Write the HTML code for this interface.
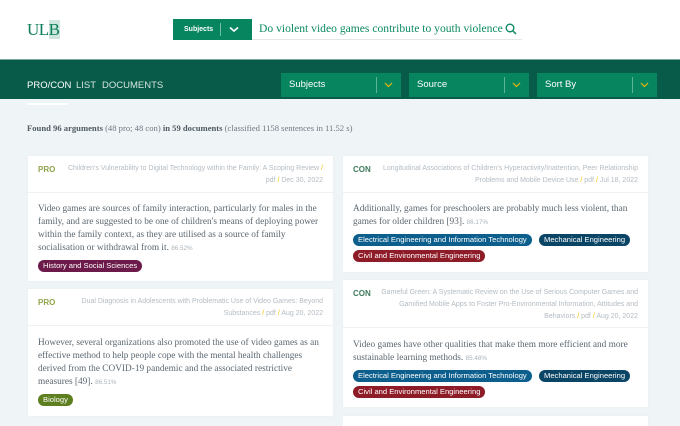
<!DOCTYPE html>
<html><head><meta charset="utf-8"><style>
*{margin:0;padding:0;box-sizing:border-box}
body{width:680px;height:422px;overflow:hidden;background:#eff4f7;font-family:"Liberation Sans",sans-serif;position:relative}
.a{position:absolute}
.serif{font-family:"Liberation Serif",serif}
.card{position:absolute;background:#fff;box-shadow:0 0 2px rgba(0,0,0,0.04)}
.hd{position:absolute;left:0;right:0;top:0;border-bottom:1px solid #eef2f4}
.lab{position:absolute;left:10px;top:9px;font-size:8px;font-weight:bold}
.pro{color:#8fa34a}.con{color:#3f7a5c}
.meta{position:absolute;right:10px;top:7px;text-align:right;font-size:7px;line-height:12px;color:#b4bcc3;white-space:nowrap}
.meta b{color:#f0c000;font-weight:normal}
.txt{position:absolute;left:10px;font-family:"Liberation Serif",serif;font-size:9.3px;line-height:13px;color:#5b6770;white-space:nowrap}
.pct{font-family:"Liberation Sans",sans-serif;font-size:6.3px;color:#aab3ba}
.tag{position:absolute;height:12px;border-radius:6px;color:#fff;font-size:7.6px;line-height:12px;padding:0 5px;white-space:nowrap}
.dd{position:absolute;top:73px;width:120px;height:24px;background:#07855f;color:#fff;font-size:9.5px;line-height:24px;padding-left:8px}
.dd i{position:absolute;left:95px;top:4px;width:1px;height:16px;background:#5fb496}
.dd svg{position:absolute;left:103px;top:9px}
</style></head><body>
<div class="a" style="left:0;top:0;width:680px;height:59px;background:#fff"></div>
<div class="a serif" style="left:27px;top:20px;font-size:17px;color:#0a7d5b;letter-spacing:-0.5px">UL<span style="background:#cfe6dc">B</span></div>
<div class="a" style="left:173px;top:19px;width:79px;height:21px;background:#07855f"></div>
<div class="a" style="left:184px;top:19px;font-size:7px;line-height:21px;color:#fff;font-weight:bold">Subjects</div>
<div class="a" style="left:220px;top:23px;width:1px;height:13px;background:#6cbf9f"></div>
<svg class="a" style="left:229px;top:26px" width="10" height="7"><path d="M1 1.5L5 5 9 1.5" stroke="#fff" stroke-width="1.6" fill="none"/></svg>
<div class="a" style="left:252px;top:39px;width:270px;height:1px;background:#e3e7ea"></div>
<div class="a serif" style="left:259px;top:22px;font-size:11.6px;color:#0c8a63;white-space:nowrap">Do violent video games contribute to youth violence</div>
<svg class="a" style="left:505px;top:23px" width="12" height="12"><circle cx="5" cy="5" r="3.8" stroke="#0c8a63" stroke-width="1.4" fill="none"/><path d="M8 8L11 11" stroke="#0c8a63" stroke-width="1.5"/></svg>
<div class="a" style="left:0;top:59px;width:680px;height:40px;background:#075b48;border-top:1px solid #7aa89a"></div>
<div class="a" style="left:27px;top:80px;font-size:9.5px;color:#fff">PRO/CON</div>
<div class="a" style="left:76px;top:80px;font-size:9.5px;color:#d5e4df">LIST</div>
<div class="a" style="left:102px;top:80px;font-size:9.5px;color:#d5e4df">DOCUMENTS</div>
<div class="a" style="left:27px;top:103px;width:41px;height:2px;background:#fff"></div>
<div class="dd" style="left:281px">Subjects<i></i><svg width="9" height="6"><path d="M1 1L4.5 4.5 8 1" stroke="#e8b810" stroke-width="1.2" fill="none"/></svg></div>
<div class="dd" style="left:409px">Source<i></i><svg width="9" height="6"><path d="M1 1L4.5 4.5 8 1" stroke="#e8b810" stroke-width="1.2" fill="none"/></svg></div>
<div class="dd" style="left:537px">Sort By<i></i><svg width="9" height="6"><path d="M1 1L4.5 4.5 8 1" stroke="#e8b810" stroke-width="1.2" fill="none"/></svg></div>
<div class="a serif" style="left:27px;top:123px;font-size:8.6px;color:#6d7880;white-space:nowrap"><b style="color:#4f5a62">Found 96 arguments</b> (48 pro; 48 con) <b style="color:#4f5a62">in 59 documents</b> (classified 1158 sentences in 11.52 s)</div>

<div class="card" style="left:28px;top:156px;width:305px;height:125px">
<div class="hd" style="height:37px"></div>
<div class="lab pro">PRO</div>
<div class="meta">Children's Vulnerability to Digital Technology within the Family: A Scoping Review <b>/</b><br>pdf <b>/</b> Dec 30, 2022</div>
<div class="txt" style="top:47px">Video games are sources of family interaction, particularly for males in the<br>family, and are suggested to be one of children's means of deploying power<br>within the family context, as they are utilised as a source of family<br>socialisation or withdrawal from it. <span class="pct">86.52%</span></div>
<div class="tag" style="left:10px;top:104px;background:#6b1a4a">History and Social Sciences</div>
</div>

<div class="card" style="left:28px;top:289px;width:305px;height:127px">
<div class="hd" style="height:37px"></div>
<div class="lab pro">PRO</div>
<div class="meta">Dual Diagnosis in Adolescents with Problematic Use of Video Games: Beyond<br>Substances <b>/</b> pdf <b>/</b> Aug 20, 2022</div>
<div class="txt" style="top:48px">However, several organizations also promoted the use of video games as an<br>effective method to help people cope with the mental health challenges<br>derived from the COVID-19 pandemic and the associated restrictive<br>measures [49]. <span class="pct">86.51%</span></div>
<div class="tag" style="left:10px;top:105px;background:#5e7f1f">Biology</div>
</div>

<div class="card" style="left:343px;top:156px;width:305px;height:116px">
<div class="hd" style="height:37px"></div>
<div class="lab con">CON</div>
<div class="meta">Longitudinal Associations of Children's Hyperactivity/Inattention, Peer Relationship<br>Problems and Mobile Device Use <b>/</b> pdf <b>/</b> Jul 18, 2022</div>
<div class="txt" style="top:47px">Additionally, games for preschoolers are probably much less violent, than<br>games for older children [93]. <span class="pct">86.17%</span></div>
<div class="tag" style="left:10px;top:78px;background:#0c5e8c">Electrical Engineering and Information Technology</div>
<div class="tag" style="left:196px;top:78px;background:#0b4566">Mechanical Engineering</div>
<div class="tag" style="left:10px;top:94px;background:#8e1c28">Civil and Environmental Engineering</div>
</div>

<div class="card" style="left:343px;top:280px;width:305px;height:127px">
<div class="hd" style="height:48px"></div>
<div class="lab con">CON</div>
<div class="meta">Gameful Green: A Systematic Review on the Use of Serious Computer Games and<br>Gamified Mobile Apps to Foster Pro-Environmental Information, Attitudes and<br>Behaviors <b>/</b> pdf <b>/</b> Aug 20, 2022</div>
<div class="txt" style="top:59px">Video games have other qualities that make them more efficient and more<br>sustainable learning methods. <span class="pct">85.48%</span></div>
<div class="tag" style="left:10px;top:90px;background:#0c5e8c">Electrical Engineering and Information Technology</div>
<div class="tag" style="left:196px;top:90px;background:#0b4566">Mechanical Engineering</div>
<div class="tag" style="left:10px;top:106px;background:#8e1c28">Civil and Environmental Engineering</div>
</div>
<div class="card" style="left:343px;top:416px;width:305px;height:10px"></div>
</body></html>
